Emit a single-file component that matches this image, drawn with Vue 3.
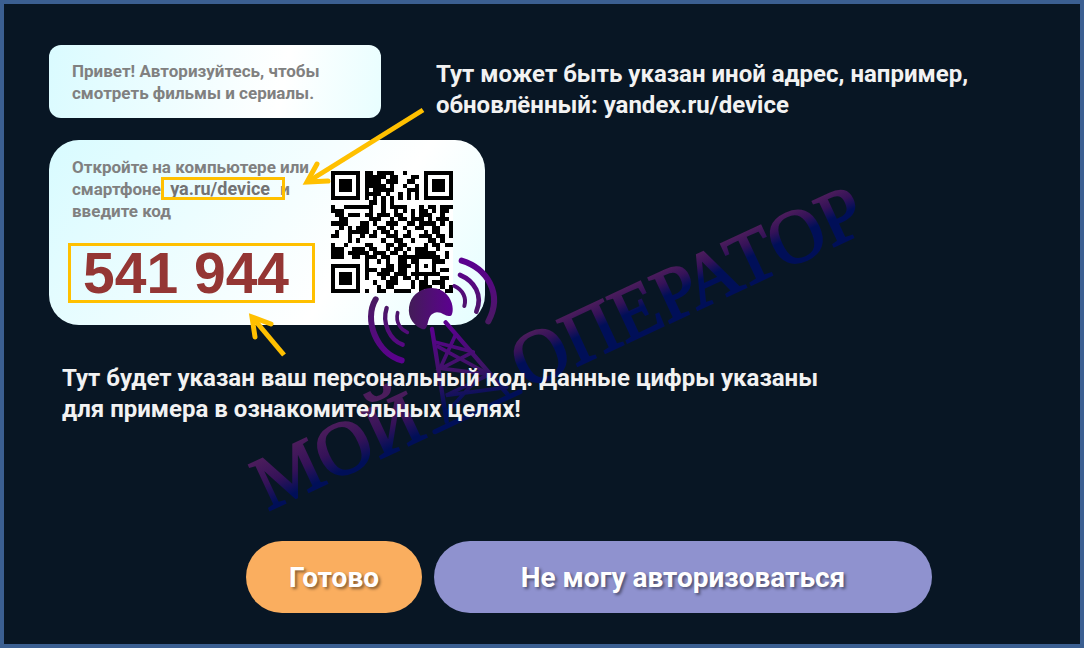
<script setup>
import { ref } from 'vue'

const code = ref('541 944')

// 29 x 29 QR modules, one string per row
const modules = [
  '11111110110111100100001111111',
  '10000010111110110001101000001',
  '10111010111101110011001011101',
  '10111010111110100100101011101',
  '10111010101111100011101011101',
  '10000010111101001010101000001',
  '11111110101010101010101111111',
  '00000000011010100000000000000',
  '10011111110010111100010110111',
  '11100000010010010101011010110',
  '01101110110111011001011100100',
  '00110000011100101101110101110',
  '11110001101001110011011110101',
  '00101011100110100100110011001',
  '01001111101011010010001011001',
  '11001001011001110110011101101',
  '00001010000010011001000110100',
  '10010000110001101100001011011',
  '11100111011001011010111001000',
  '11101111101110110100111110010',
  '11100110111011001111111111010',
  '00000000100101001101100011100',
  '11111110100001101110101010000',
  '10000010111011101100100010110',
  '10111010100111011101111111000',
  '10111010100010110110101000110',
  '10111010001001110001011011100',
  '10000010000101100001011100101',
  '11111110100110011110010111011'
]
const qrPath = modules
  .flatMap((row, y) => [...row].map((m, x) => (m === '1' ? `M${x} ${y}h1v1h-1z` : '')))
  .join('')
</script>

<template>
  <main class="screen">
    <div class="top">
      <section class="card hello">
        Привет! Авторизуйтесь, чтобы<br />смотреть фильмы и сериалы.
      </section>
      <p class="caption">
        Тут может быть указан иной адрес, например,<br />обновлённый: yandex.ru/device
      </p>
    </div>

    <section class="card login">
      <div class="info">
        <p class="steps">
          Откройте на компьютере или<br />смартфоне <a class="url" href="#">ya.ru/device</a> и<br />введите код
        </p>
        <output class="code">{{ code }}</output>
      </div>
      <svg class="qr" viewBox="0 0 29 29" shape-rendering="crispEdges" role="img" aria-label="QR">
        <rect width="29" height="29" fill="#fff" />
        <path :d="qrPath" />
      </svg>
    </section>

    <p class="caption note">
      Тут будет указан ваш персональный код. Данные цифры указаны<br />для примера в ознакомительных целях!
    </p>

    <div class="actions">
      <button class="btn done" type="button">Готово</button>
      <button class="btn fail" type="button">Не могу авторизоваться</button>
    </div>

    <svg class="overlay mark" width="1084" height="648" viewBox="0 0 1084 648" aria-hidden="true">
      <defs>
        <linearGradient id="word" x1="0" y1="0" x2="0" y2="1">
          <stop offset="0.2" stop-color="#4c1d5c" />
          <stop offset="0.5" stop-color="#351258" />
          <stop offset="0.75" stop-color="#000f58" />
        </linearGradient>
        <linearGradient id="wordLong" x1="0" y1="0" x2="0" y2="1">
          <stop offset="0.2" stop-color="#4c1d5c" />
          <stop offset="0.35" stop-color="#351258" />
          <stop offset="0.5" stop-color="#000f58" />
        </linearGradient>
        <linearGradient id="dish" x1="0" y1="0" x2="1" y2="0">
          <stop offset="0" stop-color="#431c58" />
          <stop offset="1" stop-color="#5c0090" />
        </linearGradient>
        <linearGradient id="wave" gradientUnits="userSpaceOnUse" x1="0" y1="60" x2="0" y2="250">
          <stop offset="0" stop-color="#5c0090" />
          <stop offset="1" stop-color="#4a1a62" />
        </linearGradient>
        <linearGradient id="waveLeft" gradientUnits="userSpaceOnUse" x1="0" y1="180" x2="0" y2="370">
          <stop offset="0" stop-color="#4a1a62" />
          <stop offset="1" stop-color="#5c0090" />
        </linearGradient>
        <linearGradient id="tower" gradientUnits="userSpaceOnUse" x1="340" y1="250" x2="400" y2="530">
          <stop offset="0" stop-color="#5c0090" />
          <stop offset="0.5" stop-color="#3f1466" />
          <stop offset="0.85" stop-color="#000f58" />
        </linearGradient>
      </defs>
      <g class="word">
        <text fill="url(#word)" stroke="url(#word)" transform="translate(268 511) rotate(-25)">МОЙ</text>
        <text fill="url(#wordLong)" stroke="url(#wordLong)" transform="translate(526 390) rotate(-25)">ОПЕРАТОР</text>
      </g>
      <g transform="translate(340 240) scale(0.3333)" fill="none" stroke-linecap="round">
        <g stroke="url(#tower)" stroke-width="11">
          <path d="M276 267L320 545M317 247L502 462" stroke-width="13" />
          <path d="M285 575L540 455" stroke-width="15" />
          <path d="M287 307L400 336M345 288L302 382M294 320L445 402M397 337L304 385L445 403M445 405L318 466L500 442M400 430L318 520" />
        </g>
        <path fill="url(#dish)" d="M246 267C212 252 200 220 210 188C226 142 295 125 327 172C342 195 340 222 333 227C318 233 310 217 291 217C270 220 267 234 262 254C258 268 252 269 246 267Z" />
        <g stroke="url(#wave)">
          <path d="M365 62C440 85 490 160 445 244" stroke-width="18" />
          <path d="M360 105C403 123 430 165 409 215" stroke-width="14" />
          <path d="M343 138C370 150 380 175 373 198" stroke-width="12" />
        </g>
        <g stroke="url(#waveLeft)">
          <path d="M107 178C70 240 110 340 185 361" stroke-width="18" />
          <path d="M140 204C125 250 150 300 188 314" stroke-width="13" />
          <path d="M173 218C165 250 185 270 202 277" stroke-width="11" />
        </g>
      </g>
    </svg>

    <svg class="overlay arrows" width="1084" height="648" viewBox="0 0 1084 648" aria-hidden="true">
      <g fill="none" stroke="#ffc000" stroke-width="5">
        <path d="M423 110L309 181" />
        <path d="M317 164L307 182L328 181" stroke-linecap="round" />
        <path d="M284 355L253 318" />
        <path d="M255 337L252 317L271 324" stroke-linecap="round" />
      </g>
    </svg>
  </main>
</template>

<style>
body {
  margin: 0;
}
</style>

<style scoped>
.screen {
  position: relative;
  box-sizing: border-box;
  min-height: 100vh;
  padding: 41px 45px 31px;
  overflow: hidden;
  border: 4px solid #3b5f91;
  background: #081624;
  font-family: Roboto, "Liberation Sans", sans-serif;
  font-weight: 700;
}
p {
  margin: 0;
}
.top {
  display: flex;
  align-items: flex-start;
  gap: 55px;
}
.card {
  box-sizing: border-box;
  color: #808080;
  font-size: 17px;
  line-height: 22px;
}
.hello {
  width: 332px;
  padding: 15px 23px 14px;
  border-radius: 12px;
  background: linear-gradient(100deg, #dafbff, #fff 70%, #e8feff);
}
.caption {
  position: relative;
  z-index: 2;
  color: #f2f2f2;
  font-size: 24px;
  line-height: 31px;
}
.top .caption {
  margin-bottom: -3px;
  padding-top: 14px;
}
.login {
  display: flex;
  justify-content: space-between;
  width: 436px;
  margin-top: 22px;
  padding: 16px 32px 22px 19px;
  border-radius: 30px;
  background: linear-gradient(125deg, #d8fbff, #fff 68%, #e4feff);
}
.steps {
  padding-left: 4px;
}
.url {
  position: relative;
  margin: 0 6px 0 5px;
  color: #737373;
  font-size: 18px;
  text-decoration: none;
}
.url::after {
  position: absolute;
  inset: -1px -15px -1px -9px;
  border: 3px solid #ffc000;
  content: "";
}
.code {
  display: block;
  box-sizing: border-box;
  width: 247px;
  margin-top: 21px;
  padding: 0 12px;
  border: 3px solid #ffc000;
  color: #943634;
  font-family: "Liberation Sans", sans-serif;
  font-size: 57px;
  line-height: 54px;
  white-space: nowrap;
}
.qr {
  width: 122px;
  height: 122px;
  margin-top: 15px;
}
.note {
  margin: 38px 0 0 13px;
}
.actions {
  display: flex;
  gap: 12px;
  margin: 116px 0 0 197px;
}
.btn {
  height: 72px;
  padding: 0;
  border: 0;
  border-radius: 38px;
  color: #fff;
  font: inherit;
  font-size: 28px;
  text-shadow: 2px 2px 3px rgba(0, 0, 0, 0.45);
}
.done {
  width: 176px;
  background: #faae5f;
}
.fail {
  width: 498px;
  background: #8f92cf;
}
.overlay {
  position: absolute;
  top: -4px;
  left: -4px;
  pointer-events: none;
}
.mark {
  z-index: 1;
}
.arrows {
  z-index: 3;
}
.word {
  font-family: "Liberation Serif", serif;
  font-size: 76px;
  font-weight: 400;
  stroke-width: 2px;
}
</style>
